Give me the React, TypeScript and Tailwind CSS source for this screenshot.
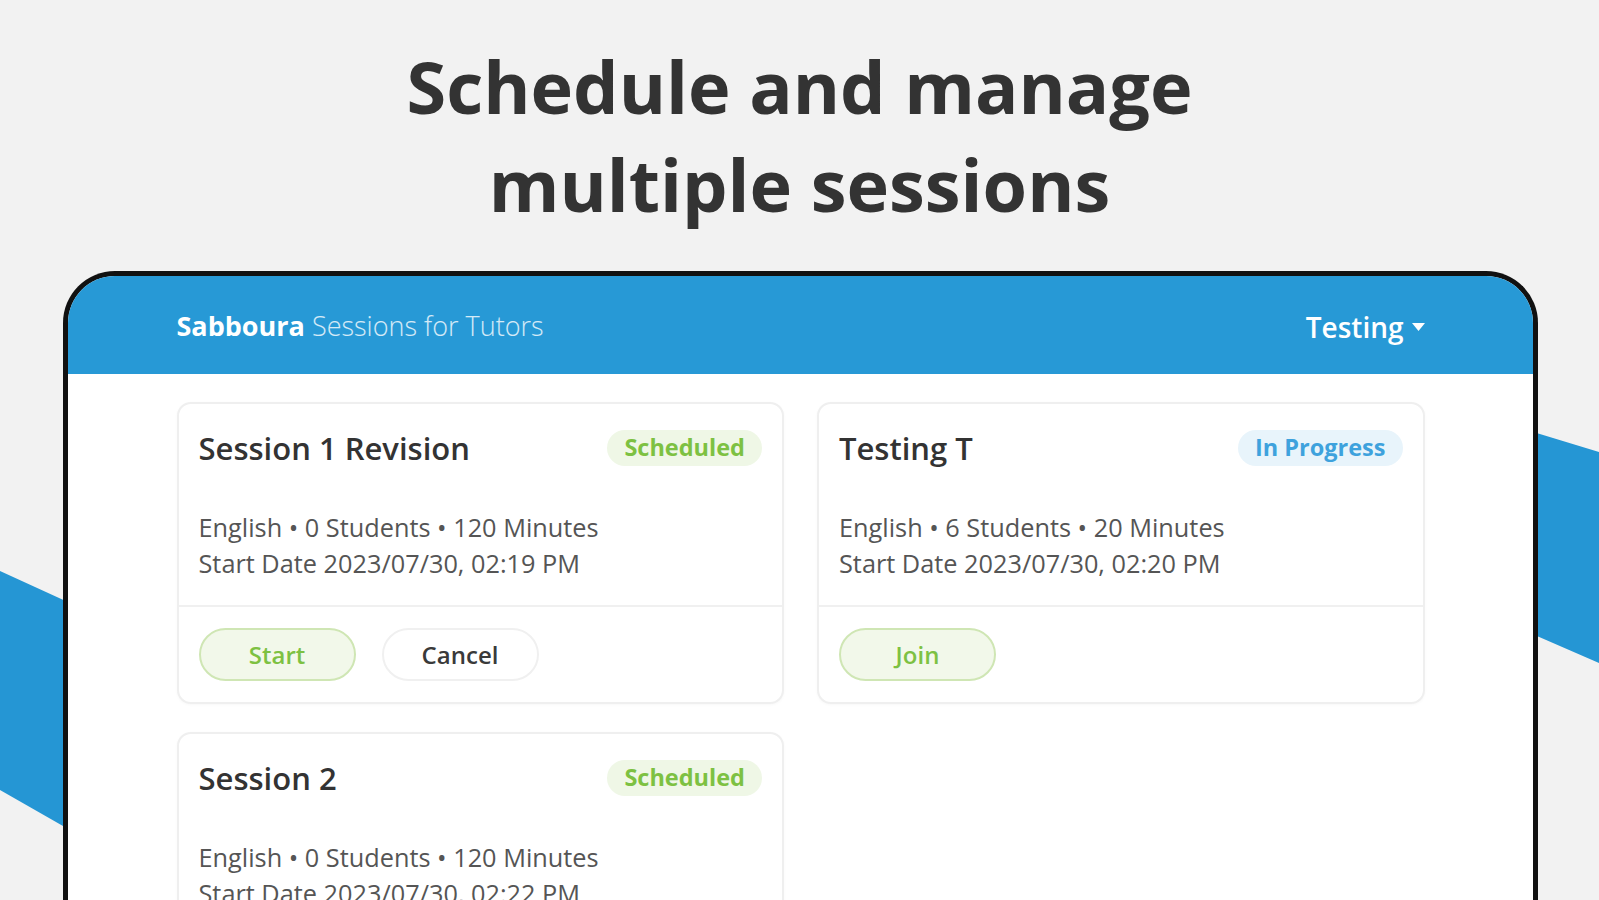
type Session = {
  title: string;
  status: "scheduled" | "progress";
  students: number;
  minutes: number;
  start: string;
  actions: string[];
};

const sessions: Session[] = [
  {
    title: "Session 1 Revision",
    status: "scheduled",
    students: 0,
    minutes: 120,
    start: "2023/07/30, 02:19 PM",
    actions: ["Start", "Cancel"],
  },
  {
    title: "Testing T",
    status: "progress",
    students: 6,
    minutes: 20,
    start: "2023/07/30, 02:20 PM",
    actions: ["Join"],
  },
  {
    title: "Session 2",
    status: "scheduled",
    students: 0,
    minutes: 120,
    start: "2023/07/30, 02:22 PM",
    actions: ["Start", "Cancel"],
  },
];

function Badge({ status }: { status: Session["status"] }) {
  if (status === "progress") {
    return (
      <span className="flex h-[36px] items-center rounded-full bg-[#e8f4fb] px-[17px] text-[23.5px] font-bold text-[#3ea2dd]">
        In Progress
      </span>
    );
  }
  return (
    <span className="flex h-[36px] items-center rounded-full bg-[#eff7e6] px-[17px] text-[23.5px] font-bold text-[#7dc142]">
      Scheduled
    </span>
  );
}

function ActionButton({ label }: { label: string }) {
  const green = label !== "Cancel";
  return (
    <button
      className={
        green
          ? "flex h-[53px] w-[157px] items-center justify-center rounded-full border-2 border-[#cfe6b4] bg-[#f2f8ea] text-[24px] font-semibold text-[#7dc142]"
          : "flex h-[53px] w-[157px] items-center justify-center rounded-full border-2 border-[#f0f0f0] bg-white text-[24px] font-semibold text-[#3a3a3a]"
      }
    >
      {label}
    </button>
  );
}

function SessionCard({ s }: { s: Session }) {
  return (
    <div className="rounded-[14px] border-2 border-[#efefef] bg-white shadow-[0_1px_3px_rgba(0,0,0,0.03)]">
      <div className="px-[20px] pb-[24px] pt-[24px]">
        <div className="flex h-[40px] items-center justify-between">
          <h2 className="text-[31px] font-semibold text-[#333]">{s.title}</h2>
          <Badge status={s.status} />
        </div>
        <div className="mt-[41px] text-[25.3px] leading-[36px] text-[#555]">
          <p>
            English • {s.students} Students • {s.minutes} Minutes
          </p>
          <p>Start Date {s.start}</p>
        </div>
      </div>
      <div className="flex gap-[26px] border-t-2 border-[#f0f0f0] px-[20px] py-[21px]">
        {s.actions.map((a) => (
          <ActionButton key={a} label={a} />
        ))}
      </div>
    </div>
  );
}

export default function App() {
  return (
    <div
      className="relative h-[900px] w-full overflow-hidden bg-[#f2f2f2]"
      style={{ fontFamily: '"Open Sans", "Noto Sans", sans-serif' }}
    >
      {/* blue ribbon behind the device */}
      <svg
        className="absolute left-0 top-0"
        width="1599"
        height="900"
        viewBox="0 0 1599 900"
      >
        <path
          d="M0 571 L70 603 L1530 431 L1599 452 L1599 663 L1530 633 L70 830 L0 790 Z"
          fill="#2596d4"
        />
      </svg>

      <div className="relative">
        <h1 className="pt-[37px] text-center text-[72px] font-bold leading-[98px] text-[#333]">
          Schedule and manage
          <br />
          multiple sessions
        </h1>

        <div className="ml-[63px] mt-[38px] h-[700px] w-[1475px] overflow-hidden rounded-t-[52px] border-[5px] border-b-0 border-[#111] bg-white">
          <header className="h-[98px] bg-[#2799d6]">
            <div className="mx-auto flex h-full w-[1248px] items-center justify-between pt-[3px] text-white">
              <div className="text-[27px]">
                <span className="font-bold">Sabboura</span>{" "}
                <span className="font-light text-white/80">Sessions for Tutors</span>
              </div>
              <div className="flex items-center gap-[8px] text-[28px] font-semibold">
                Testing
                <svg width="13" height="8" viewBox="0 0 13 8">
                  <path d="M0 0 H13 L6.5 8 Z" fill="white" />
                </svg>
              </div>
            </div>
          </header>

          <main className="mx-auto grid w-[1248px] grid-cols-2 gap-x-[33px] gap-y-[28px] pt-[28px]">
            {sessions.map((s) => (
              <SessionCard key={s.title} s={s} />
            ))}
          </main>
        </div>
      </div>
    </div>
  );
}
